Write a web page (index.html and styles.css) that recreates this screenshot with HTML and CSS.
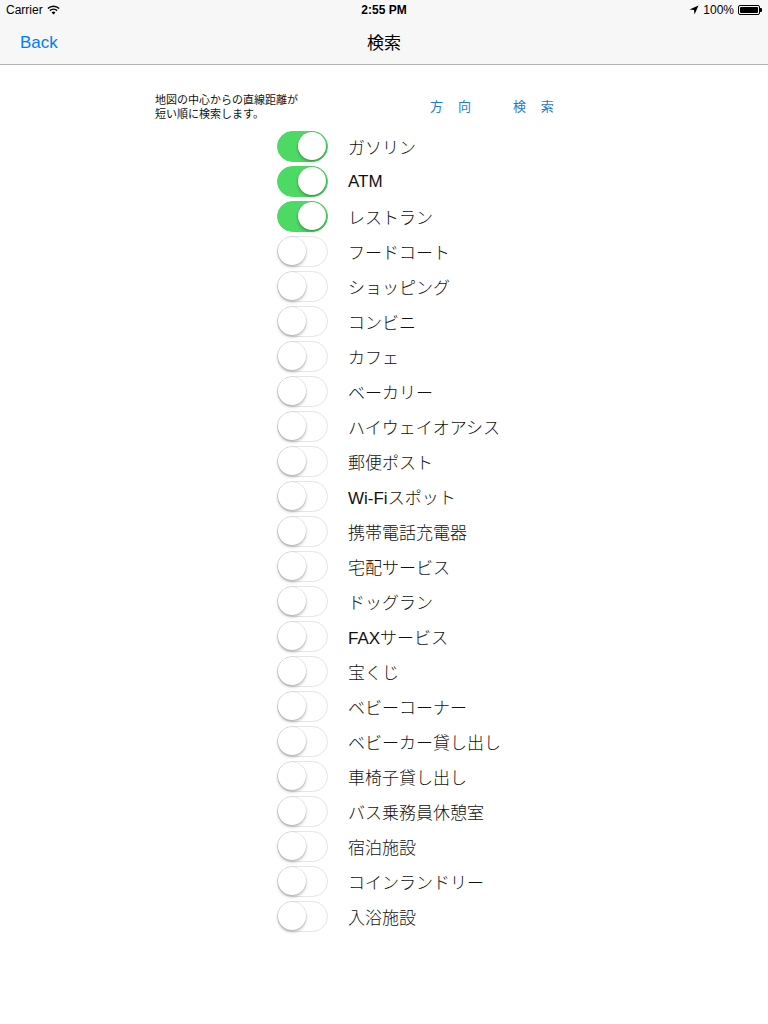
FILE: index.html
```html
<!DOCTYPE html>
<html lang="ja">
<head>
<meta charset="utf-8">
<link rel="stylesheet" href="styles.css">
</head>
<body>
<div class="status">
  <div class="status-left">Carrier
    <svg class="wifi" width="13" height="10" viewBox="0 0 13 10"><path d="M6.5 9.5 L4.6 7.4 A2.8 2.8 0 0 1 8.4 7.4 Z" fill="#000"/><path d="M2.9 5.6 A5.2 5.2 0 0 1 10.1 5.6" stroke="#000" stroke-width="1.5" fill="none"/><path d="M0.9 3.5 A8 8 0 0 1 12.1 3.5" stroke="#000" stroke-width="1.5" fill="none"/></svg>
  </div>
  <div class="status-time">2:55 PM</div>
  <div class="status-right">
    <svg width="10" height="10" viewBox="0 0 10 10"><path d="M9.5 0.5 L0.5 4.5 L5 5 L5.5 9.5 Z" fill="#000"/></svg>
    <span>100%</span>
    <span class="battery"><span class="battery-fill"></span></span><span class="battery-tip"></span>
  </div>
</div>
<div class="navbar">
  <div class="back">Back</div>
  <div class="title">検索</div>
</div>
<div class="intro">
  <div class="intro-text">地図の中心からの直線距離が<br>短い順に検索します。</div>
  <div class="intro-links"><span>方 向</span><span>検 索</span></div>
</div>
<div class="list">
  <div class="row"><span class="switch on"><span class="knob"></span></span><span class="label">ガソリン</span></div>
  <div class="row"><span class="switch on"><span class="knob"></span></span><span class="label">ATM</span></div>
  <div class="row"><span class="switch on"><span class="knob"></span></span><span class="label">レストラン</span></div>
  <div class="row"><span class="switch"><span class="knob"></span></span><span class="label">フードコート</span></div>
  <div class="row"><span class="switch"><span class="knob"></span></span><span class="label">ショッピング</span></div>
  <div class="row"><span class="switch"><span class="knob"></span></span><span class="label">コンビニ</span></div>
  <div class="row"><span class="switch"><span class="knob"></span></span><span class="label">カフェ</span></div>
  <div class="row"><span class="switch"><span class="knob"></span></span><span class="label">ベーカリー</span></div>
  <div class="row"><span class="switch"><span class="knob"></span></span><span class="label">ハイウェイオアシス</span></div>
  <div class="row"><span class="switch"><span class="knob"></span></span><span class="label">郵便ポスト</span></div>
  <div class="row"><span class="switch"><span class="knob"></span></span><span class="label">Wi-Fiスポット</span></div>
  <div class="row"><span class="switch"><span class="knob"></span></span><span class="label">携帯電話充電器</span></div>
  <div class="row"><span class="switch"><span class="knob"></span></span><span class="label">宅配サービス</span></div>
  <div class="row"><span class="switch"><span class="knob"></span></span><span class="label">ドッグラン</span></div>
  <div class="row"><span class="switch"><span class="knob"></span></span><span class="label">FAXサービス</span></div>
  <div class="row"><span class="switch"><span class="knob"></span></span><span class="label">宝くじ</span></div>
  <div class="row"><span class="switch"><span class="knob"></span></span><span class="label">ベビーコーナー</span></div>
  <div class="row"><span class="switch"><span class="knob"></span></span><span class="label">ベビーカー貸し出し</span></div>
  <div class="row"><span class="switch"><span class="knob"></span></span><span class="label">車椅子貸し出し</span></div>
  <div class="row"><span class="switch"><span class="knob"></span></span><span class="label">バス乗務員休憩室</span></div>
  <div class="row"><span class="switch"><span class="knob"></span></span><span class="label">宿泊施設</span></div>
  <div class="row"><span class="switch"><span class="knob"></span></span><span class="label">コインランドリー</span></div>
  <div class="row"><span class="switch"><span class="knob"></span></span><span class="label">入浴施設</span></div>
</div>
</body>
</html>
```
FILE: styles.css
```css
* { box-sizing: border-box; }
html, body { margin: 0; padding: 0; background: #fff; }
body {
  width: 768px;
  height: 1024px;
  font-family: "Liberation Sans", "Noto Sans CJK JP", sans-serif;
  color: #000;
}
.status {
  height: 20px;
  background: #f7f7f7;
  display: flex;
  align-items: center;
  justify-content: space-between;
  padding: 0 6px;
  font-size: 12px;
  position: relative;
}
.status-left { display: flex; align-items: center; gap: 4px; }
.status-time {
  position: absolute;
  left: 0; right: 0;
  text-align: center;
  font-weight: bold;
  font-size: 12px;
}
.status-right { display: flex; align-items: center; gap: 4px; }
.battery {
  width: 22px; height: 10px;
  border: 1px solid #000;
  border-radius: 2px;
  padding: 1px;
  display: inline-flex;
}
.battery-fill { flex: 1; background: #000; border-radius: 1px; }
.battery-tip { width: 2px; height: 4px; background: #000; margin-left: -4px; border-radius: 0 1px 1px 0; }
.navbar {
  height: 45px;
  background: #f7f7f7;
  border-bottom: 1px solid #b2b2b2;
  display: flex;
  align-items: center;
  position: relative;
}
.back {
  color: #007aff;
  font-size: 17px;
  padding-left: 20px;
  margin-top: 1px;
}
.title {
  position: absolute;
  left: 0; right: 0;
  text-align: center;
  font-size: 17px;
  font-family: "Noto Sans CJK JP", sans-serif;
  margin-top: -1px;
}
.intro {
  display: flex;
  align-items: center;
  padding: 20px 0 0 155px;
  height: 62px;
}
.intro-text {
  font-family: "Noto Sans CJK JP", sans-serif;
  font-size: 11px;
  line-height: 14px;
  color: #111;
  width: 275px;
  margin-top: -1px;
}
.intro-links {
  display: flex;
  gap: 36px;
  color: #1a7ad4;
  font-family: "Noto Sans CJK JP", sans-serif;
  font-size: 13px;
  letter-spacing: 6px;
  margin-top: -2px;
}
.list {
  display: flex;
  flex-direction: column;
  gap: 4px;
  padding: 4px 0 0 277px;
}
.row {
  display: flex;
  align-items: center;
  height: 31px;
  gap: 20px;
}
.switch {
  width: 51px;
  height: 31px;
  border-radius: 16px;
  border: 1.5px solid #e5e5e5;
  background: #fff;
  position: relative;
  flex: none;
}
.switch .knob {
  position: absolute;
  top: 0; left: 0;
  width: 28px; height: 28px;
  border-radius: 50%;
  background: #fff;
  box-shadow: 0 2px 3px rgba(0,0,0,0.25), 0 0 0 0.5px rgba(0,0,0,0.12);
}
.switch.on {
  background: #4cd964;
  border-color: #4cd964;
}
.switch.on .knob { left: 20px; }
.label {
  font-size: 17px;
  font-family: "Liberation Sans", "Noto Sans CJK JP", sans-serif;
  font-weight: 300;
  color: #111;
}
```
